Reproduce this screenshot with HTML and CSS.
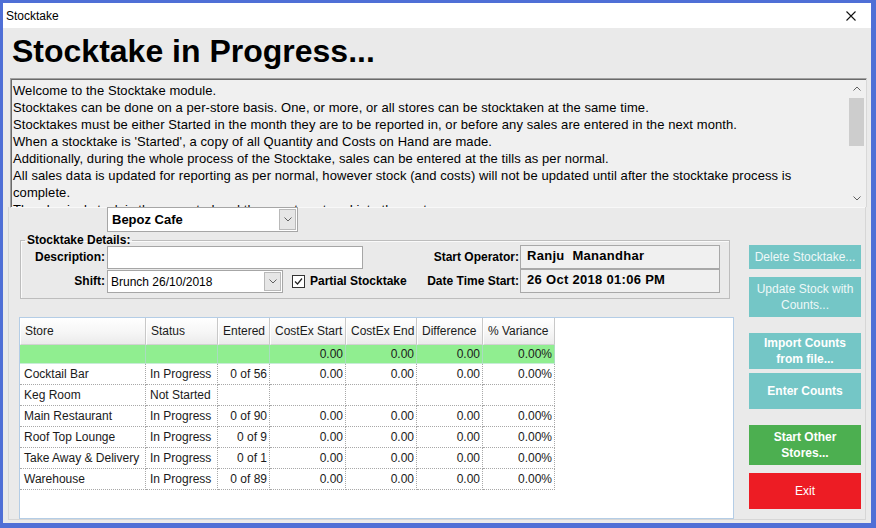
FILE: index.html
```html
<!DOCTYPE html>
<html>
<head>
  <meta charset="UTF-8">
  <meta name="viewport" content="width=device-width, initial-scale=1.0">
  <link rel="stylesheet" href="styles.css">
</head>
<body>
  <div class="window">
    <div class="titlebar">
      <span class="title">Stocktake</span>
      <svg class="close" width="10" height="10" viewBox="0 0 10 10">
        <path d="M0.5 0.5L9.5 9.5M9.5 0.5L0.5 9.5" stroke="#111" stroke-width="1.1" fill="none"/>
      </svg>
    </div>

    <div class="content">
      <h1 class="heading">Stocktake in Progress...</h1>

      <div class="info">
        <div class="info-text">
          <div>Welcome to the Stocktake module.</div>
          <div>Stocktakes can be done on a per-store basis. One, or more, or all stores can be stocktaken at the same time.</div>
          <div>Stocktakes must be either Started in the month they are to be reported in, or before any sales are entered in the next month.</div>
          <div>When a stocktake is 'Started', a copy of all Quantity and Costs on Hand are made.</div>
          <div>Additionally, during the whole process of the Stocktake, sales can be entered at the tills as per normal.</div>
          <div>All sales data is updated for reporting as per normal, however stock (and costs) will not be updated until after the stocktake process is complete.</div>
          <div>The physical stock is then counted and the counts entered into the system.</div>
        </div>
        <div class="scrollbar">
          <div class="scroll-btn">
            <svg width="8" height="5" viewBox="0 0 8 5"><path d="M0.5 4.5L4 1L7.5 4.5" stroke="#606060" fill="none"/></svg>
          </div>
          <div class="scroll-track"><div class="scroll-thumb"></div></div>
          <div class="scroll-btn">
            <svg width="8" height="5" viewBox="0 0 8 5"><path d="M0.5 0.5L4 4L7.5 0.5" stroke="#606060" fill="none"/></svg>
          </div>
        </div>
      </div>

      <div class="lower">
        <div class="main-col">
          <div class="combo store-combo">
            <span class="combo-text">Bepoz Cafe</span>
            <span class="combo-btn">
              <svg width="8" height="5" viewBox="0 0 8 5"><path d="M0.5 0.5L4 4L7.5 0.5" stroke="#606060" fill="none"/></svg>
            </span>
          </div>

          <fieldset class="details">
            <legend>Stocktake Details:</legend>
            <div class="details-body">
              <div class="details-left">
                <div class="row">
                  <label class="field-label">Description:</label>
                  <div class="text-input"></div>
                </div>
                <div class="row">
                  <label class="field-label">Shift:</label>
                  <div class="combo shift-combo">
                    <span class="combo-text">Brunch 26/10/2018</span>
                    <span class="combo-btn">
                      <svg width="8" height="5" viewBox="0 0 8 5"><path d="M0.5 0.5L4 4L7.5 0.5" stroke="#606060" fill="none"/></svg>
                    </span>
                  </div>
                  <span class="checkbox">
                    <svg width="11" height="11" viewBox="0 0 11 11"><path d="M2 5.5L4.5 8L9 2.5" stroke="#222" stroke-width="1.2" fill="none"/></svg>
                  </span>
                  <span class="check-label">Partial Stocktake</span>
                </div>
              </div>
              <div class="details-right">
                <div class="row">
                  <label class="field-label">Start Operator:</label>
                  <div class="value-box">Ranju&nbsp; Manandhar</div>
                </div>
                <div class="row">
                  <label class="field-label">Date Time Start:</label>
                  <div class="value-box">26 Oct 2018 01:06 PM</div>
                </div>
              </div>
            </div>
          </fieldset>

          <div class="grid-panel">
            <table class="stores">
              <colgroup>
                <col style="width:126px"><col style="width:72px"><col style="width:52px">
                <col style="width:76px"><col style="width:71px"><col style="width:66px"><col style="width:72px">
              </colgroup>
              <thead>
                <tr>
                  <th>Store</th><th>Status</th><th>Entered</th><th>CostEx Start</th><th>CostEx End</th><th>Difference</th><th>% Variance</th>
                </tr>
              </thead>
              <tbody>
                <tr class="total">
                  <td></td><td></td><td></td><td class="num">0.00</td><td class="num">0.00</td><td class="num">0.00</td><td class="num">0.00%</td>
                </tr>
                <tr>
                  <td>Cocktail Bar</td><td>In Progress</td><td class="num">0 of 56</td><td class="num">0.00</td><td class="num">0.00</td><td class="num">0.00</td><td class="num">0.00%</td>
                </tr>
                <tr>
                  <td>Keg Room</td><td>Not Started</td><td class="num"></td><td class="num"></td><td class="num"></td><td class="num"></td><td class="num"></td>
                </tr>
                <tr>
                  <td>Main Restaurant</td><td>In Progress</td><td class="num">0 of 90</td><td class="num">0.00</td><td class="num">0.00</td><td class="num">0.00</td><td class="num">0.00%</td>
                </tr>
                <tr>
                  <td>Roof Top Lounge</td><td>In Progress</td><td class="num">0 of 9</td><td class="num">0.00</td><td class="num">0.00</td><td class="num">0.00</td><td class="num">0.00%</td>
                </tr>
                <tr>
                  <td>Take Away &amp; Delivery</td><td>In Progress</td><td class="num">0 of 1</td><td class="num">0.00</td><td class="num">0.00</td><td class="num">0.00</td><td class="num">0.00%</td>
                </tr>
                <tr>
                  <td>Warehouse</td><td>In Progress</td><td class="num">0 of 89</td><td class="num">0.00</td><td class="num">0.00</td><td class="num">0.00</td><td class="num">0.00%</td>
                </tr>
              </tbody>
            </table>
          </div>
        </div>

        <div class="side">
          <button class="btn btn-teal btn-disabled btn-delete">Delete Stocktake...</button>
          <button class="btn btn-teal btn-disabled btn-update">Update Stock with Counts...</button>
          <button class="btn btn-teal btn-import">Import Counts from file...</button>
          <button class="btn btn-teal btn-enter">Enter Counts</button>
          <button class="btn btn-green btn-start">Start Other Stores...</button>
          <button class="btn btn-red btn-exit">Exit</button>
        </div>
      </div>
    </div>
  </div>
</body>
</html>
```

FILE: styles.css
```css
* {
  box-sizing: border-box;
  font-family: "Liberation Sans", Arial, sans-serif;
}
body {
  margin: 0;
  padding: 0;
  background: #fff;
}
.window {
  width: 876px;
  height: 528px;
  border-style: solid;
  border-color: #4f6fd6;
  border-width: 3px 5px 5px 3px;
  display: flex;
  flex-direction: column;
  overflow: hidden;
  background: #eaeaea;
}
.titlebar {
  height: 25px;
  background: #fff;
  display: flex;
  align-items: center;
  padding: 0 0 0 3px;
  flex-shrink: 0;
}
.title {
  font-size: 12px;
  color: #000;
  padding-top: 1px;
}
.close {
  margin-left: auto;
  margin-right: 15px;
  margin-top: 1px;
}
.content {
  flex: 1;
  padding: 0 0 0 5px;
  display: flex;
  flex-direction: column;
}
.heading {
  margin: 3px 0 0 4px;
  height: 40px;
  font-size: 32px;
  line-height: 40px;
  font-weight: bold;
  color: #000;
}

/* description box */
.info {
  margin: 7px 0 0 2px;
  width: 857px;
  height: 130px;
  background: #f0f0f0;
  border-top: 1px solid #a0a0a0;
  border-left: 1px solid #a0a0a0;
  border-right: 1px solid #d8d8d8;
  border-bottom: 1px solid #f8f8f8;
  box-shadow: inset 1px 1px 0 #6a6a6a;
  display: flex;
  overflow: hidden;
}
.info-text {
  flex: 1;
  padding: 3px 0 0 2px;
  font-size: 13px;
  letter-spacing: 0.08px;
  line-height: 17px;
  color: #000;
  overflow: hidden;
}
.scrollbar {
  width: 17px;
  margin: 1px 1px 0 0;
  display: flex;
  flex-direction: column;
  background: #f0f0f0;
}
.scroll-btn {
  height: 17px;
  display: flex;
  align-items: center;
  justify-content: center;
}
.scroll-track {
  flex: 1;
  padding-top: 1px;
}
.scroll-thumb {
  height: 48px;
  margin: 0 1px;
  background: #cdcdcd;
}

/* lower area */
.lower {
  margin-top: -1px;
  width: 858px;
  display: flex;
  padding: 0 3px 0 10px;
  border: 1px solid #d6d6d6;
  border-top: none;
}
.main-col {
  width: 715px;
  display: flex;
  flex-direction: column;
}
.combo {
  display: flex;
  align-items: center;
  background: #fff;
  border: 1px solid #a6a6a6;
}
.combo-text {
  flex: 1;
  padding-left: 4px;
  white-space: nowrap;
}
.combo-btn {
  width: 17px;
  align-self: stretch;
  margin: 1px;
  background: #e6e6e6;
  border: 1px solid #b9b9b9;
  display: flex;
  align-items: center;
  justify-content: center;
}
.store-combo {
  margin-left: 88px;
  width: 191px;
  height: 25px;
  font-size: 13px;
  font-weight: bold;
  color: #000;
}
.details {
  margin: 1px 0 0 1px;
  width: 710px;
  padding: 0 0 5px 0;
  border: 1px solid #bdbdbd;
  box-shadow: inset 1px 1px 0 #fafafa;
}
.details legend {
  margin-left: 4px;
  padding: 0 2px;
  font-size: 12px;
  line-height: 14px;
  font-weight: bold;
  color: #000;
}
.details-body {
  display: flex;
  margin-top: -2px;
}
.row {
  height: 24px;
  display: flex;
  align-items: center;
}
.field-label {
  font-size: 12px;
  font-weight: bold;
  color: #000;
  text-align: right;
}
.details-left .field-label {
  width: 84px;
}
.text-input {
  margin-left: 2px;
  margin-top: 1px;
  width: 256px;
  height: 23px;
  background: #fff;
  border: 1px solid #a6a6a6;
}
.shift-combo {
  margin-left: 2px;
  margin-top: 1px;
  width: 176px;
  height: 23px;
  font-size: 12px;
  color: #000;
}
.shift-combo .combo-text {
  padding-left: 3px;
}
.checkbox {
  margin-left: 9px;
  width: 13px;
  height: 13px;
  background: #fff;
  border: 1px solid #333;
  display: flex;
  align-items: center;
  justify-content: center;
}
.check-label {
  margin-left: 5px;
  font-size: 12px;
  font-weight: bold;
  color: #000;
}
.details-right {
  margin-left: auto;
  margin-right: 9px;
}
.details-right .field-label {
  width: 110px;
  margin-right: 1px;
}
.value-box {
  width: 200px;
  height: 24px;
  padding: 0 6px;
  background: #f0f0f0;
  border: 1px solid #a8a8a8;
  font-size: 13px;
  font-weight: bold;
  line-height: 20px;
  letter-spacing: 0.3px;
  color: #000;
  white-space: pre;
}

/* stores grid */
.grid-panel {
  margin-top: 18px;
  height: 202px;
  background: #fff;
  border: 1px solid #b4cde6;
}
.stores {
  border-collapse: separate;
  border-spacing: 0;
  table-layout: fixed;
  width: 535px;
  font-size: 12px;
  color: #1a1a1a;
}
.stores th {
  height: 27px;
  padding: 0 0 0 4px;
  text-align: left;
  font-weight: normal;
  line-height: 26px;
  white-space: nowrap;
  overflow: hidden;
  background: linear-gradient(#ffffff, #f6f6f6 55%, #ebebeb);
  border-right: 1px solid #c8c8c8;
  border-bottom: 1px solid #d2d2d2;
  border-left: 1px solid #fff;
}
.stores td {
  height: 21px;
  padding: 0 2px 0 4px;
  line-height: 20px;
  white-space: nowrap;
  overflow: hidden;
  border-right: 1px dotted #a8a8a8;
  border-bottom: 1px dotted #a8a8a8;
}
.stores .total td {
  height: 19px;
  line-height: 18px;
  background: #90ee90;
  border-right: 1px solid #a9dcc0;
  border-bottom: 1px solid #c8ecd8;
}
.stores td.num {
  text-align: right;
}

/* action buttons */
.side {
  margin-left: 15px;
  width: 112px;
  padding-top: 38px;
  display: flex;
  flex-direction: column;
}
.btn {
  width: 112px;
  border: none;
  padding: 0 4px;
  font-size: 12px;
  line-height: 16px;
  font-weight: bold;
  color: #fff;
  cursor: pointer;
}
.btn-teal {
  background: #74c6c6;
}
.btn-green {
  background: #4caf50;
}
.btn-red {
  background: #ed1c24;
  font-weight: normal;
}
.btn-disabled {
  font-weight: normal;
  color: #eef8f8;
}
.btn-delete {
  height: 24px;
}
.btn-update {
  height: 40px;
  margin-top: 8px;
}
.btn-import {
  height: 36px;
  margin-top: 16px;
}
.btn-enter {
  height: 36px;
  margin-top: 4px;
}
.btn-start {
  height: 40px;
  margin-top: 16px;
}
.btn-exit {
  height: 36px;
  margin-top: 8px;
}
```
